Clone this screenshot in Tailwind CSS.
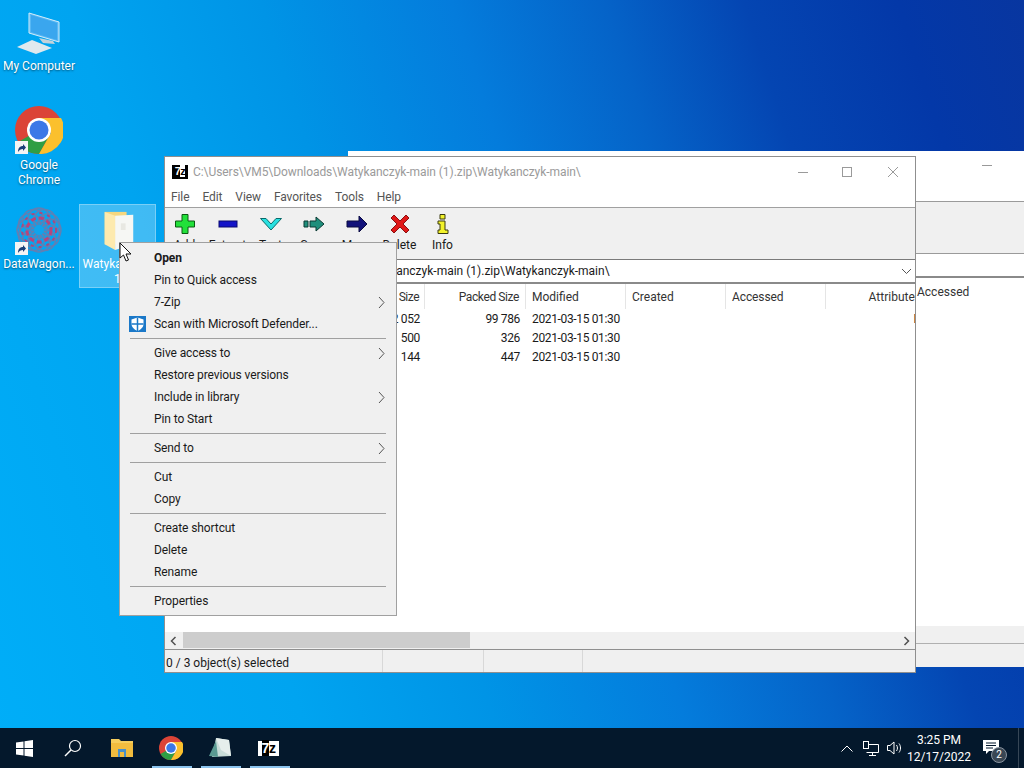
<!DOCTYPE html>
<html lang="en">
<head>
<meta charset="UTF-8">
<title>Desktop</title>
<script src="https://cdn.jsdelivr.net/npm/@tailwindcss/browser@4"></script>
</head>
<body class="overflow-hidden">
<div class="relative w-[1024px] h-[768px] overflow-hidden font-['Roboto',sans-serif] text-[12px] text-[#1a1a1a] bg-[linear-gradient(72deg,#00aef8_0%,#00a4f0_25%,#0094e6_40%,#047cdc_55%,#0563c8_67%,#0445b2_78%,#0338a8_90%,#0836a0_100%)]">

  <!-- desktop icons -->
  <div class="absolute left-0 top-[8px] w-[78px] flex flex-col items-center text-white [text-shadow:0_1px_2px_rgba(0,0,0,0.5)]">
    <svg width="46" height="50" viewBox="0 0 46 50">
      <polygon points="13,5 43,14 43,34 13,25" fill="#58b8f4" stroke="#d4ecfa" stroke-width="1"/>
      <polygon points="15,7 41,15 41,32 15,24" fill="#3aa6ee"/>
      <polygon points="23,30 37,33 39,36 27,35" fill="#c4d2da"/>
      <polygon points="1,39 16,32 36,40 20,46" fill="#dfe9ee"/>
    </svg>
    <span class="leading-[16px]">My Computer</span>
  </div>

  <div class="absolute left-0 top-[106px] w-[78px] flex flex-col items-center text-white [text-shadow:0_1px_2px_rgba(0,0,0,0.5)]">
    <div class="relative w-[48px] h-[48px]">
      <svg width="48" height="48" viewBox="0 0 48 48">
        <circle cx="24" cy="24" r="24" fill="#db4437"/>
        <path d="M24 24 L3.2 36 A24 24 0 0 0 24 48 L36 27 Z" fill="#2f9e44"/>
        <path d="M24 12 H46 A24 24 0 0 1 24 48 L36 27 Z" fill="#fbc02d"/>
        <circle cx="24" cy="24" r="12" fill="#ffffff"/>
        <circle cx="24" cy="24" r="9.5" fill="#3b78e7"/>
      </svg>
      <svg class="absolute left-0 bottom-0" width="13" height="13" viewBox="0 0 13 13"><rect width="13" height="13" fill="#f4f4f4"/><path d="M3 11 C3 7 5 5 8 5 V3 L11 6.500 L8 10 V8 C6 8 4 9 3 11 Z" fill="#1a3f78"/></svg>
    </div>
    <span class="mt-[4px] leading-[15px] text-center">Google<br>Chrome</span>
  </div>

  <div class="absolute left-0 top-[207px] w-[78px] flex flex-col items-center text-white [text-shadow:0_1px_2px_rgba(0,0,0,0.5)]">
    <div class="relative w-[46px] h-[46px]">
      <svg width="46" height="46" viewBox="0 0 46 46" fill="none" stroke="#5f80b4" stroke-width="1.500">
        <circle cx="23" cy="12" r="11"/>
        <circle cx="23" cy="12" r="11" transform="rotate(30 23 23)"/>
        <circle cx="23" cy="12" r="11" transform="rotate(60 23 23)"/>
        <circle cx="23" cy="12" r="11" transform="rotate(90 23 23)"/>
        <circle cx="23" cy="12" r="11" transform="rotate(120 23 23)"/>
        <circle cx="23" cy="12" r="11" transform="rotate(150 23 23)"/>
        <circle cx="23" cy="12" r="11" transform="rotate(180 23 23)"/>
        <circle cx="23" cy="12" r="11" transform="rotate(210 23 23)"/>
        <circle cx="23" cy="12" r="11" transform="rotate(240 23 23)"/>
        <circle cx="23" cy="12" r="11" transform="rotate(270 23 23)"/>
        <circle cx="23" cy="12" r="11" transform="rotate(300 23 23)"/>
        <circle cx="23" cy="12" r="11" transform="rotate(330 23 23)"/>
        <circle cx="23" cy="23" r="12" stroke="#b8447c" stroke-width="3" stroke-dasharray="5 3"/>
        <circle cx="23" cy="23" r="17" stroke="#a84a80" stroke-width="2" stroke-dasharray="3 5"/>
        <circle cx="23" cy="23" r="5" fill="#10a4ec" stroke="none"/>
      </svg>
      <svg class="absolute left-[-1px] bottom-[-2px]" width="13" height="13" viewBox="0 0 13 13"><rect width="13" height="13" fill="#f4f4f4"/><path d="M3 11 C3 7 5 5 8 5 V3 L11 6.500 L8 10 V8 C6 8 4 9 3 11 Z" fill="#1a3f78"/></svg>
    </div>
    <span class="mt-[3px] leading-[16px]">DataWagon...</span>
  </div>

  <div class="absolute left-[79px] top-[204px] w-[77px] h-[84px] bg-white/25 border border-white/30 flex flex-col items-center text-white">
    <svg class="mt-[5px]" width="34" height="42" viewBox="0 0 34 42">
      <polygon points="3,2 26,2 26,36 3,36" fill="#f6d77f"/>
      <polygon points="3,2 14,6 14,42 3,36" fill="#fdeaae"/>
      <polygon points="14,6 33,5 33,36 14,42" fill="#f6f7f4"/>
      <rect x="20" y="14" width="5" height="7" fill="#e8e8e2"/>
    </svg>
    <span class="mt-[7px] leading-[15px] text-center">Watykanczyk<br>1</span>
  </div>

  <!-- back window -->
  <div class="absolute left-[348px] top-[151px] w-[690px] h-[516px] bg-white flex flex-col">
    <div class="h-[50px] flex justify-end pr-[46px] pt-[7px]"><div class="w-[10px] h-px bg-[#999999] mt-[7px]"></div></div>
    <div class="h-[52px] bg-[#f0f0f0] border-t border-[#9a9a9a]"></div>
    <div class="h-[23px] border-t border-[#9a9a9a]"></div>
    <div class="h-[27px] border-t-2 border-[#8a8a8a] pl-[569px] pt-[5px] text-[#333333]">Accessed</div>
    <div class="flex-1"></div>
    <div class="h-[17px] bg-[#f0f0f0]"></div>
    <div class="h-[24px] border-t border-[#b0b0b0] bg-[#f0f0f0]"></div>
  </div>

  <!-- 7-Zip window -->
  <div class="absolute left-[164px] top-[156px] w-[752px] h-[517px] bg-white border border-[#8f8f8f] flex flex-col overflow-hidden">
    <div class="h-[29px] shrink-0 flex items-center pl-[7px] text-[#9a9a9a]">
      <div class="w-[16px] h-[14px] bg-black flex items-center justify-center mr-[5px]">
        <span class="font-['Liberation_Sans',sans-serif] text-[11px] font-bold leading-none text-white tracking-[-0.5px]">7<span class="bg-white text-black">z</span></span>
      </div>
      <span class="tracking-[-0.06px]">C:\Users\VM5\Downloads\Watykanczyk-main (1).zip\Watykanczyk-main\</span>
      <div class="ml-auto flex items-center -mr-px">
        <svg width="46" height="14" viewBox="0 0 46 14"><path d="M20 7.500 H30" stroke="#9a9a9a"/></svg>
        <svg width="46" height="14" viewBox="0 0 46 14"><rect x="18.500" y="2.500" width="9" height="9" fill="none" stroke="#9a9a9a"/></svg>
        <svg width="46" height="14" viewBox="0 0 46 14"><path d="M18 2 L28 12 M28 2 L18 12" stroke="#9a9a9a"/></svg>
      </div>
    </div>
    <div class="h-[21px] shrink-0 flex items-center gap-[13px] pl-[6px] text-[#555555] tracking-[-0.1px]">
      <span>File</span><span>Edit</span><span>View</span><span>Favorites</span><span>Tools</span><span>Help</span>
    </div>
    <div class="h-[52px] shrink-0 bg-[#f0f0f0] border-t border-[#a0a0a0] flex -ml-[2px]">
      <div class="w-[43px] flex flex-col items-center pt-[6px]">
        <svg width="20" height="20" viewBox="0 0 20 20"><path d="M7 0.500 H13 V7 H19.500 V13 H13 V19.500 H7 V13 H0.500 V7 H7 Z" fill="#22e03a" stroke="#0a5a12"/></svg>
        <span class="mt-[2px]">Add</span>
      </div>
      <div class="w-[43px] flex flex-col items-center pt-[6px]">
        <svg width="20" height="20" viewBox="0 0 20 20"><rect x="1" y="7" width="18" height="6" fill="#1414c8" stroke="#0a0a70"/></svg>
        <span class="mt-[2px]">Extract</span>
      </div>
      <div class="w-[43px] flex flex-col items-center pt-[6px]">
        <svg width="22" height="20" viewBox="0 0 22 20"><path d="M0.500 4.500 L6 4.500 L11 10 L16 4.500 L21.500 4.500 L11 16 Z" fill="#28e0e0" stroke="#0a6a6a"/></svg>
        <span class="mt-[2px]">Test</span>
      </div>
      <div class="w-[43px] flex flex-col items-center pt-[6px]">
        <svg width="22" height="20" viewBox="0 0 22 20"><path d="M1 7 H5 V13 H1 Z M7 7 H13 V3 L21 10 L13 17 V13 H7 Z" fill="#1f8f7c" stroke="#0a3a33"/></svg>
        <span class="mt-[2px]">Copy</span>
      </div>
      <div class="w-[43px] flex flex-col items-center pt-[6px]">
        <svg width="22" height="20" viewBox="0 0 22 20"><path d="M1 7 H13 V2 L21 10 L13 18 V13 H1 Z" fill="#12127a" stroke="#0a0a40"/></svg>
        <span class="mt-[2px]">Move</span>
      </div>
      <div class="w-[43px] flex flex-col items-center pt-[6px]">
        <svg width="20" height="20" viewBox="0 0 20 20"><path d="M4 1 L10 7 L16 1 L19 4 L13 10 L19 16 L16 19 L10 13 L4 19 L1 16 L7 10 L1 4 Z" fill="#e01818" stroke="#8a1010"/></svg>
        <span class="mt-[2px]">Delete</span>
      </div>
      <div class="w-[43px] flex flex-col items-center pt-[6px]">
        <svg width="12" height="20" viewBox="0 0 12 20"><path d="M3 0.500 H8 V5 H3 Z M1 7 H8 V16 H11 V19.500 H1 V16 H3 V10 H1 Z" fill="#f2f22a" stroke="#3a3a10"/></svg>
        <span class="mt-[2px]">Info</span>
      </div>
    </div>
    <div class="h-[25px] shrink-0 border-t border-b-2 border-t-[#7a7a7a] border-b-[#8a8a8a] flex items-center pl-[53px] text-[#1a1a1a]">
      <span>C:\Users\VM5\Downloads\Watykanczyk-main (1).zip\Watykanczyk-main\</span>
      <svg class="ml-auto mr-[3px]" width="11" height="7" viewBox="0 0 11 7"><path d="M1 1 L5.500 5.500 L10 1" fill="none" stroke="#555555"/></svg>
    </div>
    <div class="flex-1 relative">
      <div class="grid grid-cols-[160px_100px_101px_100px_100px_100px_100px] h-[25px] items-center text-[#333333]">
        <span class="h-full"></span>
        <span class="h-full flex items-center justify-end pr-[5px] border-r border-[#e5e5e5] tracking-[-0.5px]">Size</span>
        <span class="h-full flex items-center justify-end pr-[6px] border-r border-[#e5e5e5] tracking-[-0.4px]">Packed Size</span>
        <span class="h-full flex items-center pl-[6px] border-r border-[#e5e5e5]">Modified</span>
        <span class="h-full flex items-center pl-[6px] border-r border-[#e5e5e5]">Created</span>
        <span class="h-full flex items-center pl-[6px] border-r border-[#e5e5e5] tracking-[-0.1px]">Accessed</span>
        <span class="h-full flex items-center justify-end pr-[5px]">Attributes</span>
      </div>
      <div class="tracking-[-0.35px]">
        <div class="grid grid-cols-[255px_100px_106px_100px_100px_100px] h-[19px] items-center">
          <span class="text-right">12 052</span><span class="text-right">99 786</span><span class="pl-[12px]">2021-03-15 01:30</span><span></span><span></span><span class="text-right pr-[5px]">D</span>
        </div>
        <div class="grid grid-cols-[255px_100px_106px] h-[19px] items-center">
          <span class="text-right">500</span><span class="text-right">326</span><span class="pl-[12px]">2021-03-15 01:30</span>
        </div>
        <div class="grid grid-cols-[255px_100px_106px] h-[19px] items-center">
          <span class="text-right">144</span><span class="text-right">447</span><span class="pl-[12px]">2021-03-15 01:30</span>
        </div>
      </div>
    </div>
    <div class="relative h-[17px] shrink-0 bg-[#f0f0f0] flex items-center justify-between px-[5px]">
      <svg width="7" height="10" viewBox="0 0 7 10"><path d="M5.500 1 L1.500 5 L5.500 9" fill="none" stroke="#505050" stroke-width="1.500"/></svg>
      <div class="absolute left-[18px] top-0 w-[287px] h-[16px] bg-[#cdcdcd]"></div>
      <svg width="7" height="10" viewBox="0 0 7 10"><path d="M1.500 1 L5.500 5 L1.500 9" fill="none" stroke="#505050" stroke-width="1.500"/></svg>
    </div>
    <div class="h-[23px] shrink-0 bg-[#f0f0f0] border-t border-[#8f8f8f] flex">
      <div class="w-[218px] flex items-center pl-[1px] pt-[3px] border-r border-[#d8d8d8]">0 / 3 object(s) selected</div>
      <div class="w-[101px] border-r border-[#d8d8d8]"></div>
      <div class="w-[99px] border-r border-[#d8d8d8]"></div>
    </div>
  </div>

  <!-- context menu -->
  <div class="absolute left-[119px] top-[242px] w-[278px] bg-[#f0f0f0] border border-[#a0a0a0] pt-[4px] pb-[3px] tracking-[-0.1px]">
    <div class="h-[22px] flex items-center pl-[34px] font-bold">Open</div>
    <div class="h-[22px] flex items-center pl-[34px]">Pin to Quick access</div>
    <div class="h-[22px] flex items-center pl-[34px] justify-between pr-[11px]">7-Zip<svg width="7" height="13" viewBox="0 0 7 13"><path d="M1 1 L6 6.500 L1 12" fill="none" stroke="#555555"/></svg></div>
    <div class="relative h-[22px] flex items-center pl-[34px]">
      <svg class="absolute left-[9px] top-[3px]" width="17" height="16" viewBox="0 0 17 16"><rect width="17" height="16" fill="#1a78c8"/><path d="M8.500 1.500 L14.500 3.500 V8 C14.500 11 12 13.500 8.500 15 C5 13.500 2.500 11 2.500 8 V3.500 Z" fill="#ffffff"/><path d="M8.500 1.500 V15 M2.500 8 H14.500" stroke="#1a78c8" stroke-width="1.500"/></svg>
      Scan with Microsoft Defender...
    </div>
    <div class="h-[7px] flex items-center px-[10px]"><div class="w-full h-px bg-[#a0a0a0]"></div></div>
    <div class="h-[22px] flex items-center pl-[34px] justify-between pr-[11px]">Give access to<svg width="7" height="13" viewBox="0 0 7 13"><path d="M1 1 L6 6.500 L1 12" fill="none" stroke="#555555"/></svg></div>
    <div class="h-[22px] flex items-center pl-[34px]">Restore previous versions</div>
    <div class="h-[22px] flex items-center pl-[34px] justify-between pr-[11px]">Include in library<svg width="7" height="13" viewBox="0 0 7 13"><path d="M1 1 L6 6.500 L1 12" fill="none" stroke="#555555"/></svg></div>
    <div class="h-[22px] flex items-center pl-[34px]">Pin to Start</div>
    <div class="h-[7px] flex items-center px-[10px]"><div class="w-full h-px bg-[#a0a0a0]"></div></div>
    <div class="h-[22px] flex items-center pl-[34px] justify-between pr-[11px]">Send to<svg width="7" height="13" viewBox="0 0 7 13"><path d="M1 1 L6 6.500 L1 12" fill="none" stroke="#555555"/></svg></div>
    <div class="h-[7px] flex items-center px-[10px]"><div class="w-full h-px bg-[#a0a0a0]"></div></div>
    <div class="h-[22px] flex items-center pl-[34px]">Cut</div>
    <div class="h-[22px] flex items-center pl-[34px]">Copy</div>
    <div class="h-[7px] flex items-center px-[10px]"><div class="w-full h-px bg-[#a0a0a0]"></div></div>
    <div class="h-[22px] flex items-center pl-[34px]">Create shortcut</div>
    <div class="h-[22px] flex items-center pl-[34px]">Delete</div>
    <div class="h-[22px] flex items-center pl-[34px]">Rename</div>
    <div class="h-[7px] flex items-center px-[10px]"><div class="w-full h-px bg-[#a0a0a0]"></div></div>
    <div class="h-[22px] flex items-center pl-[34px]">Properties</div>
  </div>

  <!-- mouse cursor -->
  <svg class="absolute left-[119px] top-[242px]" width="14" height="21" viewBox="0 0 14 21"><path d="M1 1 L1 16 L4.500 13 L7 19 L9.500 18 L7 12 L12 12 Z" fill="#ffffff" stroke="#111111"/></svg>

  <!-- taskbar -->
  <div class="absolute left-0 bottom-0 w-full h-[40px] bg-[#04182c] flex items-center text-white">
    <div class="w-[48px] flex justify-center">
      <svg width="17" height="17" viewBox="0 0 17 17"><path d="M0 2.500 L7.500 1.500 V8 H0 Z M8.500 1.300 L17 0 V8 H8.500 Z M0 9 H7.500 V15.500 L0 14.500 Z M8.500 9 H17 V17 L8.500 15.700 Z" fill="#ffffff"/></svg>
    </div>
    <div class="w-[49px] flex justify-center">
      <svg width="18" height="18" viewBox="0 0 18 18"><circle cx="11" cy="7" r="5.500" fill="none" stroke="#ffffff" stroke-width="1.200"/><path d="M7 11 L1 17" stroke="#ffffff" stroke-width="1.400"/></svg>
    </div>
    <div class="w-[49px] h-full flex justify-center items-center">
      <svg width="22" height="18" viewBox="0 0 22 18"><path d="M0 0 H8 L10 2 H22 V18 H0 Z" fill="#f6cd5c"/><rect y="4" width="22" height="14" fill="#f2bc3e"/><rect x="7" y="10" width="8" height="8" fill="#4a90c8"/><rect x="9" y="13" width="4" height="5" fill="#f2bc3e"/></svg>
    </div>
    <div class="relative w-[49px] h-full flex justify-center items-center">
      <svg width="24" height="24" viewBox="0 0 48 48">
        <circle cx="24" cy="24" r="24" fill="#db4437"/>
        <path d="M24 24 L3.2 36 A24 24 0 0 0 24 48 L36 27 Z" fill="#2f9e44"/>
        <path d="M24 12 H46 A24 24 0 0 1 24 48 L36 27 Z" fill="#fbc02d"/>
        <circle cx="24" cy="24" r="12" fill="#ffffff"/>
        <circle cx="24" cy="24" r="9.500" fill="#3b78e7"/>
      </svg>
      <div class="absolute bottom-0 left-[6px] right-[3px] h-[2px] bg-[#8cc4ee]"></div>
    </div>
    <div class="relative w-[49px] h-full flex justify-center items-center">
      <svg width="24" height="20" viewBox="0 0 24 20"><polygon points="8,0 21,2 23,18 4,19" fill="#c8dcd8"/><polygon points="8,0 21,2 23,18 13,12" fill="#e6eeec"/><polygon points="1,18 8,3 10,19" fill="#5a9a92"/></svg>
      <div class="absolute bottom-0 left-[6px] right-[3px] h-[2px] bg-[#8cc4ee]"></div>
    </div>
    <div class="relative w-[49px] h-full flex justify-center items-center">
      <div class="w-[21px] h-[15px] bg-white flex items-center justify-center">
        <span class="font-['Liberation_Sans',sans-serif] text-[14px] font-bold leading-none text-black tracking-[-0.5px]"><span class="bg-black text-white">7</span>z</span>
      </div>
      <div class="absolute bottom-0 left-[6px] right-[3px] h-[2px] bg-[#8cc4ee]"></div>
    </div>
    <div class="ml-auto flex items-center h-full">
      <svg class="mr-[10px]" width="12" height="7" viewBox="0 0 12 7"><path d="M0.500 6.500 L6 1 L11.500 6.500" fill="none" stroke="#ffffff"/></svg>
      <svg class="mr-[8px]" width="16" height="15" viewBox="0 0 16 15"><path d="M3.500 3.500 H15.500 V11.500 H3.500 M9.500 11.500 V14 M6 14.500 H13" fill="none" stroke="#ffffff"/><rect x="0.500" y="0.500" width="5" height="7" fill="#04182c" stroke="#ffffff"/></svg>
      <svg class="mr-[4px]" width="15" height="14" viewBox="0 0 15 14"><path d="M0.500 4.500 H3 L7 1 V13 L3 9.500 H0.500 Z M9.500 4 C10.800 6 10.800 8 9.500 10 M12 2.500 C14 5 14 9 12 11.500" fill="none" stroke="#ffffff"/></svg>
      <div class="w-[66px] text-center leading-[17px] text-[12px] pt-[2px]">3:25 PM<br>12/17/2022</div>
      <div class="relative w-[47px] h-full border-r border-white/20 mr-[5px]">
        <svg class="absolute left-[11px] top-[12px]" width="16" height="14" viewBox="0 0 16 14"><path d="M0 0 H16 V11 H6 L3 14 V11 H0 Z" fill="#ffffff"/><path d="M3 3 H13 M3 5.500 H13 M3 8 H10" stroke="#04182c"/></svg>
        <div class="absolute left-[19px] top-[19px] w-[16px] h-[16px] rounded-full bg-[#3a4754] border border-[#8a94a0] flex items-center justify-center text-[10px] leading-none">2</div>
      </div>
    </div>
  </div>
</div>
</body>
</html>
